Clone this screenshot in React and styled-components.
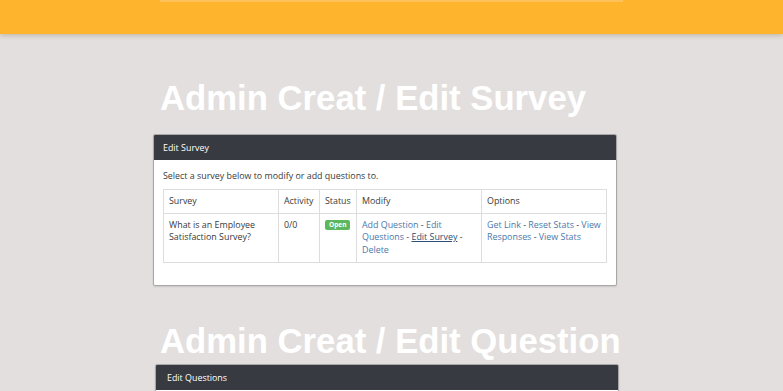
import React from 'react';
import styled, { createGlobalStyle } from 'styled-components';

const Global = createGlobalStyle`
  html, body {
    margin: 0;
    padding: 0;
    overflow: hidden;
    background: #e3dfde;
  }
  body {
    font-family: "Open Sans", "Noto Sans", sans-serif;
    color: #3a3a3a;
  }
`;

export default function App() {
  return (
    <Page>
      <Global />
      <TopBar>
        <TopLine />
      </TopBar>
      <Section $left={153} $top={44}>
        <Title $indent={7} $gap={16}>Admin Creat / Edit Survey</Title>
        <Panel>
          <PanelHeading>Edit Survey</PanelHeading>
          <PanelBody>
            <Intro>Select a survey below to modify or add questions to.</Intro>
            <Table>
              <colgroup>
                <col style={{ width: 115 }} />
                <col style={{ width: 41 }} />
                <col style={{ width: 37 }} />
                <col style={{ width: 125 }} />
                <col />
              </colgroup>
              <thead>
                <tr>
                  <Th>Survey</Th>
                  <Th>Activity</Th>
                  <Th>Status</Th>
                  <Th>Modify</Th>
                  <Th>Options</Th>
                </tr>
              </thead>
              <tbody>
                <tr>
                  <Td>What is an Employee Satisfaction Survey?</Td>
                  <Td>0/0</Td>
                  <Td>
                    <Label>Open</Label>
                  </Td>
                  <Td>
                    <Link>Add Question</Link> - <Link>Edit Questions</Link> -{' '}
                    <Link $active>Edit Survey</Link> - <Link>Delete</Link>
                  </Td>
                  <Td>
                    <Link>Get Link</Link> - <Link>Reset Stats</Link> -{' '}
                    <Link>View Responses</Link> - <Link>View Stats</Link>
                  </Td>
                </tr>
              </tbody>
            </Table>
          </PanelBody>
        </Panel>
      </Section>
      <Section $left={155} $top={35}>
        <Title $indent={5} $gap={3}>Admin Creat / Edit Question</Title>
        <Panel>
          <PanelHeading $pad={11}>Edit Questions</PanelHeading>
          <PanelBody />
        </Panel>
      </Section>
    </Page>
  );
}

const Page = styled.div`
  width: 783px;
  height: 391px;
  overflow: hidden;
`;

const TopBar = styled.header`
  height: 34px;
  background: #ffb42e;
  box-shadow: 0 2px 4px rgba(120, 90, 40, 0.25);
  position: relative;
  z-index: 1;
`;

const TopLine = styled.div`
  margin-left: 160px;
  width: 463px;
  height: 2px;
  background: #ffc15a;
`;

const Section = styled.section`
  width: 464px;
  margin-left: ${(p) => p.$left}px;
  margin-top: ${(p) => p.$top}px;
`;

const Title = styled.h1`
  margin: 0 0 ${(p) => p.$gap}px ${(p) => p.$indent}px;
  font-family: "Liberation Sans", Arial, sans-serif;
  font-weight: 700;
  font-size: 34.7px;
  line-height: 40px;
  color: #fff;
  white-space: nowrap;
`;

const Panel = styled.div`
  background: #fff;
  border: 1px solid #a9a7a7;
  border-radius: 2px;
  box-shadow: 0 1px 2px rgba(0, 0, 0, 0.12);
  overflow: hidden;
`;

const PanelHeading = styled.div`
  height: 25px;
  display: flex;
  align-items: center;
  padding-left: ${(p) => p.$pad || 9}px;
  background: #373a41;
  color: #fff;
  font-size: 8.9px;
`;

const PanelBody = styled.div`
  padding: 10px 9px 22px;
`;

const Intro = styled.p`
  margin: 0 0 7px;
  font-size: 8.9px;
  line-height: 12px;
`;

const Table = styled.table`
  width: 100%;
  border-collapse: collapse;
  table-layout: fixed;
  font-size: 8.9px;
  line-height: 12.5px;
  border: 1px solid #ddd;
`;

const Th = styled.th`
  text-align: left;
  font-weight: 400;
  padding: 5px 5px;
  height: 12px;
  border: 1px solid #ddd;
`;

const Td = styled.td`
  vertical-align: top;
  padding: 5px 5px 6px;
  border: 1px solid #ddd;
`;

const Label = styled.span`
  display: inline-block;
  padding: 1px 4px 1px;
  border-radius: 2px;
  background: #5cb85c;
  color: #fff;
  font-weight: 700;
  font-size: 6.5px;
  line-height: 8px;
  vertical-align: 1px;
`;

const Link = styled.a`
  color: ${(p) => (p.$active ? '#2c4f73' : '#4a78ab')};
  text-decoration: ${(p) => (p.$active ? 'underline' : 'none')};
  cursor: pointer;
`;
